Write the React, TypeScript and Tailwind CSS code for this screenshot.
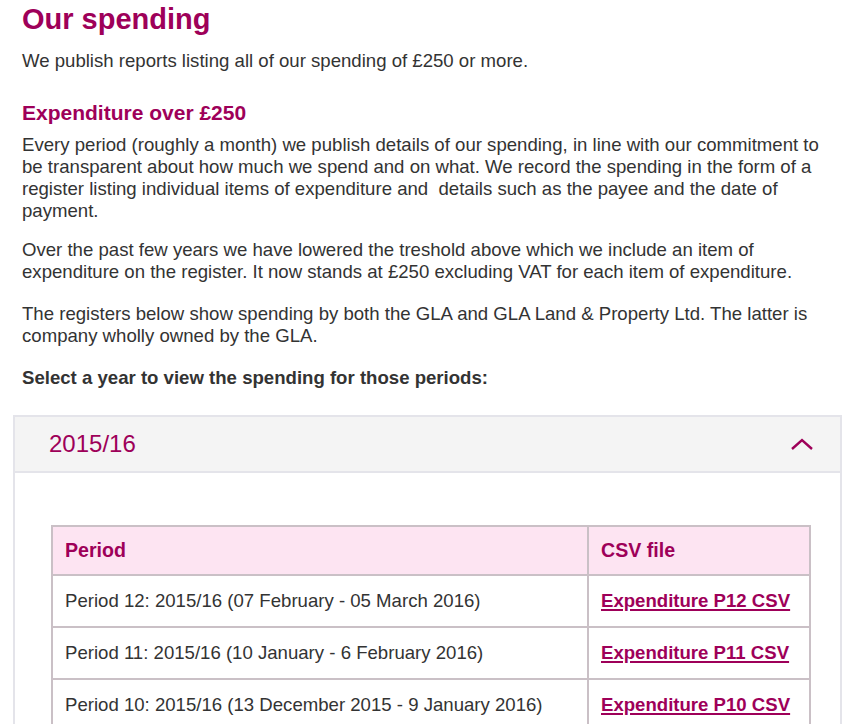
const rows = [
  { period: "Period 12: 2015/16 (07 February - 05 March 2016)", file: "Expenditure P12 CSV" },
  { period: "Period 11: 2015/16 (10 January - 6 February 2016)", file: "Expenditure P11 CSV" },
  { period: "Period 10: 2015/16 (13 December 2015 - 9 January 2016)", file: "Expenditure P10 CSV" },
];

export default function App() {
  return (
    <div className="min-h-screen bg-white font-['Liberation_Sans',Arial,sans-serif] text-[#333333]">
      <div className="pl-[22px] pr-[10px]">
        <h1 className="pt-[2px] text-[29px] font-bold leading-[34px] text-[#9e0059]">Our spending</h1>
        <p className="mt-[14px] text-[18.6px] leading-[22px]">
          We publish reports listing all of our spending of £250 or more.
        </p>

        <h2 className="mt-[28px] text-[21px] font-bold leading-[26px] text-[#9e0059]">Expenditure over £250</h2>
        <p className="mt-[8px] text-[18.6px] leading-[22px]">
          Every period (roughly a month) we publish details of our spending, in line with our commitment to
          <br />
          be transparent about how much we spend and on what. We record the spending in the form of a
          <br />
          register listing individual items of expenditure and&nbsp; details such as the payee and the date of
          <br />
          payment.
        </p>
        <p className="mt-[17px] text-[18.6px] leading-[22px]">
          Over the past few years we have lowered the treshold above which we include an item of
          <br />
          expenditure on the register. It now stands at £250 excluding VAT for each item of expenditure.
        </p>
        <p className="mt-[20px] text-[18.6px] leading-[22px]">
          The registers below show spending by both the GLA and GLA Land &amp; Property Ltd. The latter is
          <br />
          company wholly owned by the GLA.
        </p>
        <p className="mt-[20px] text-[18.6px] font-bold leading-[22px]">
          Select a year to view the spending for those periods:
        </p>
      </div>

      <div className="mx-[13px] mt-[26px] w-[829px] border-2 border-[#e4e4ea]">
        <div className="flex h-[56px] items-center justify-between border-b-2 border-[#e4e4ea] bg-[#f4f4f4] pl-[34px] pr-[26px]">
          <span className="text-[24px] leading-none text-[#9e0059]">2015/16</span>
          <svg width="24" height="14" viewBox="0 0 24 14" fill="none">
            <path d="M2 12 L12 3 L22 12" stroke="#9e0059" strokeWidth="2.4" />
          </svg>
        </div>
        <div className="pl-[36px] pr-[28px] pt-[52px]">
          <table className="w-[760px] border-collapse text-[18.6px]">
            <thead>
              <tr className="bg-[#fde4f2]">
                <th className="h-[49px] w-[536px] border-2 border-[#cac0c6] px-[12px] text-left text-[19.6px] font-bold text-[#9e0059]">
                  Period
                </th>
                <th className="border-2 border-[#cac0c6] px-[12px] text-left text-[19.6px] font-bold text-[#9e0059]">
                  CSV file
                </th>
              </tr>
            </thead>
            <tbody>
              {rows.map((r) => (
                <tr key={r.file}>
                  <td className="h-[52px] border-2 border-[#cac0c6] px-[12px] text-[#333333]">{r.period}</td>
                  <td className="border-2 border-[#cac0c6] px-[12px]">
                    <a href="#" className="font-bold text-[#9e0059] underline decoration-2 underline-offset-2">
                      {r.file}
                    </a>
                  </td>
                </tr>
              ))}
            </tbody>
          </table>
        </div>
      </div>
    </div>
  );
}
